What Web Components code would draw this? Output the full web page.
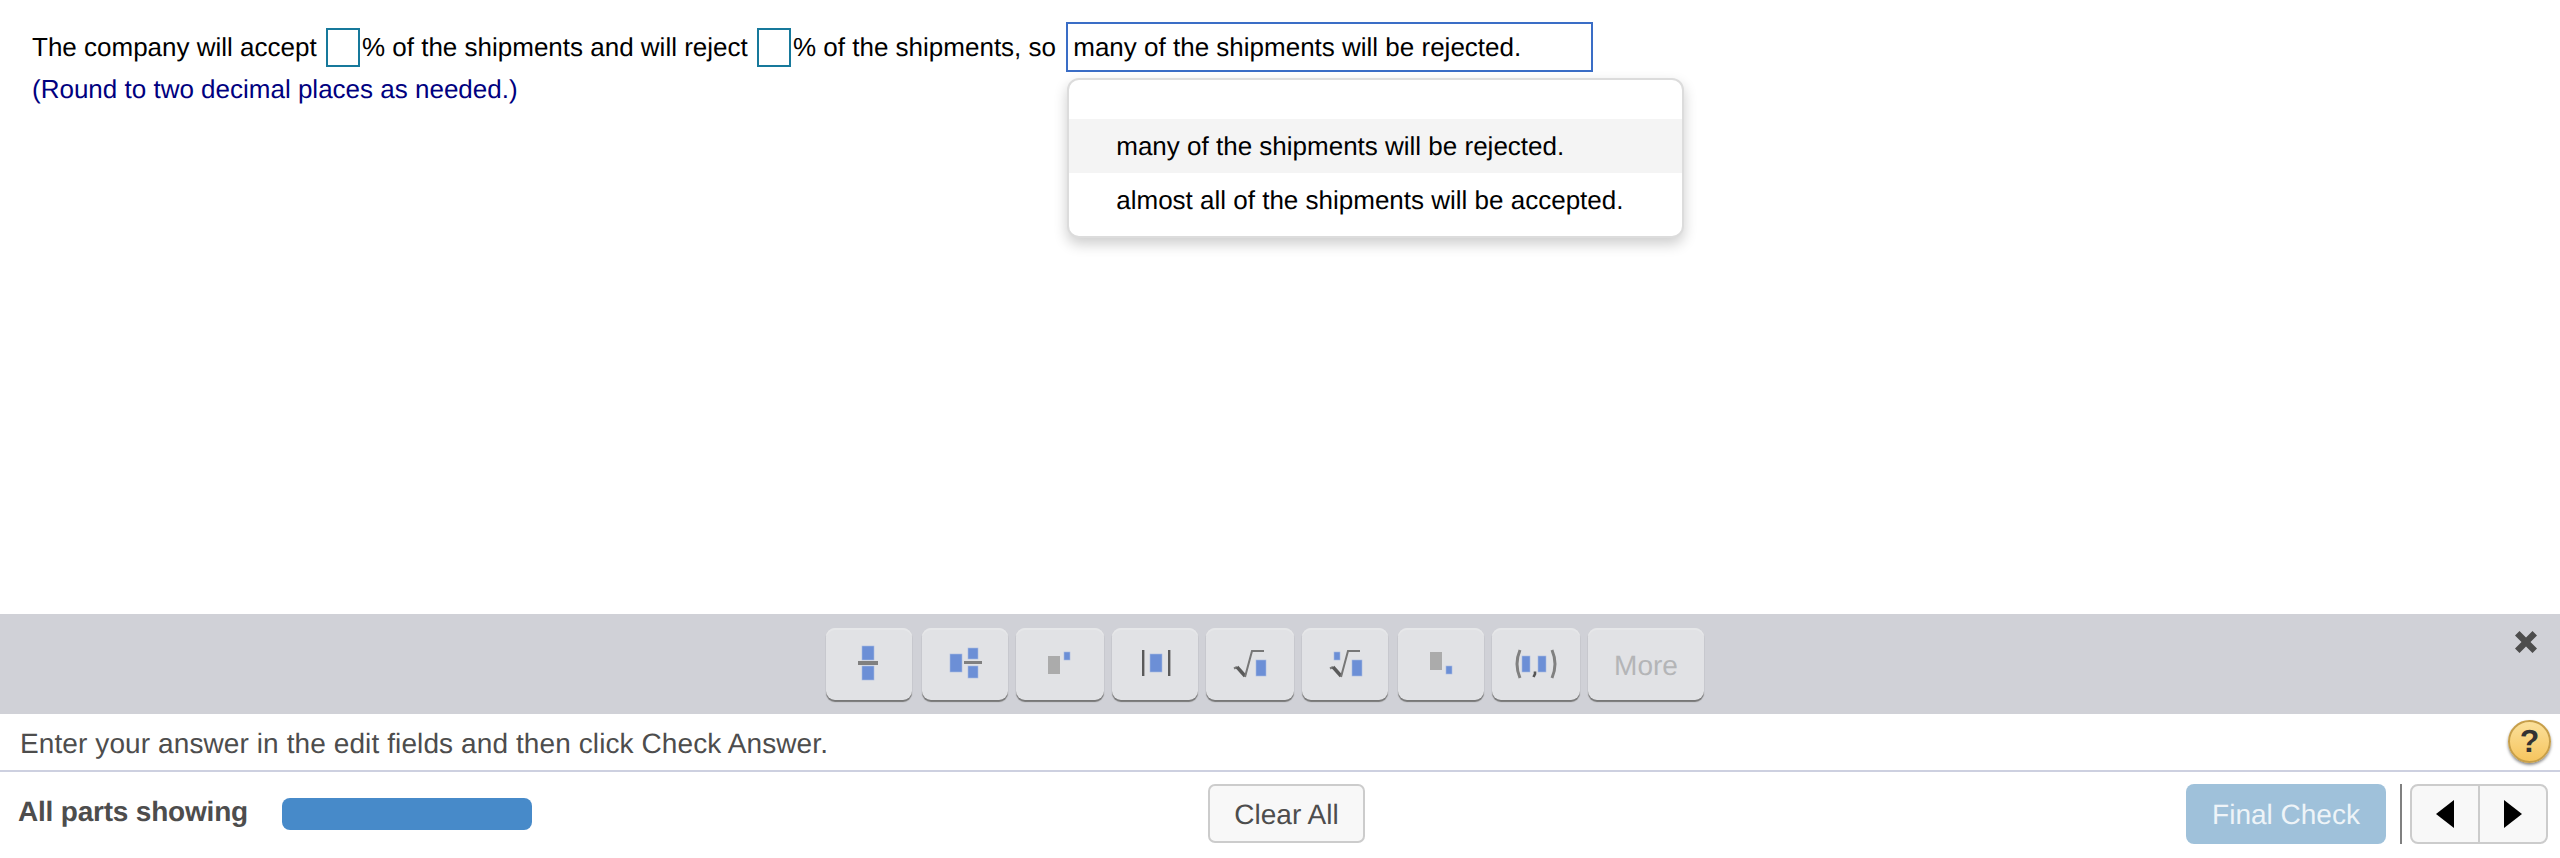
<!DOCTYPE html>
<html lang="en"><head><meta charset="utf-8"><title>Question</title>
<style>
html,body{margin:0;padding:0;background:#fff;overflow:hidden}
body{font-family:"Liberation Sans",Arial,sans-serif;text-rendering:geometricPrecision}
</style></head><body>
<q-app>
  <q-question slot="main">
    The company will accept <q-blank></q-blank>% of the shipments and will reject <q-blank></q-blank>% of the shipments, so <q-dropdown value="many of the shipments will be rejected."><q-option selected>many of the shipments will be rejected.</q-option><q-option>almost all of the shipments will be accepted.</q-option></q-dropdown>
    <span slot="note">(Round to two decimal places as needed.)</span>
  </q-question>
  <eq-toolbar slot="toolbar">
    <eq-tool w="86" style="margin-left:826px" title="fraction"><svg viewBox="0 0 86 72"><rect class="b" x="36" y="18" width="12" height="14"/><rect class="l" x="32" y="33" width="20" height="4"/><rect class="b" x="36" y="38" width="12" height="14"/></svg></eq-tool>
    <eq-tool w="86" style="margin-left:10px" title="mixed fraction"><svg viewBox="0 0 86 72"><rect class="b" x="28" y="26" width="12" height="18"/><rect class="b" x="46" y="20" width="10" height="11"/><rect class="l" x="42" y="33" width="18" height="3"/><rect class="b" x="46" y="38" width="10" height="12"/></svg></eq-tool>
    <eq-tool w="88" style="margin-left:8px" title="exponent"><svg viewBox="0 0 88 72"><rect class="g" x="32" y="28" width="12" height="18"/><rect class="b" x="48" y="24" width="6" height="8"/></svg></eq-tool>
    <eq-tool w="86" style="margin-left:8px" title="absolute value"><svg viewBox="0 0 86 72"><rect class="d" x="30" y="22" width="2.4" height="26"/><rect class="b" x="38" y="26" width="12" height="18"/><rect class="d" x="56" y="22" width="2.4" height="26"/></svg></eq-tool>
    <eq-tool w="88" style="margin-left:8px" title="square root"><svg viewBox="0 0 88 72"><path class="s" d="M28 40.500l3-1.500"/><path class="k" d="M31 39l8 9"/><path class="s" d="M39 49l7-26h12"/><rect class="b" x="50" y="32" width="10" height="16"/></svg></eq-tool>
    <eq-tool w="86" style="margin-left:8px" title="nth root"><svg viewBox="0 0 86 72"><path class="s" d="M28 40.500l3-1.500"/><path class="k" d="M31 39l8 9"/><path class="s" d="M39 49l7-26h12"/><rect class="b" x="32" y="24" width="6" height="8"/><rect class="b" x="50" y="32" width="10" height="16"/></svg></eq-tool>
    <eq-tool w="86" style="margin-left:10px" title="subscript"><svg viewBox="0 0 86 72"><rect class="g" x="32" y="24" width="12" height="18"/><rect class="b" x="48" y="38" width="6" height="8"/></svg></eq-tool>
    <eq-tool w="88" style="margin-left:8px" title="ordered pair"><svg viewBox="0 0 88 72"><path class="p" d="M28 22q-6 14 0 28M60 22q6 14 0 28"/><rect class="b" x="30" y="28" width="8" height="16"/><path class="c" d="M43 43.500v2.500l-1.500 3"/><rect class="b" x="46" y="28" width="8" height="16"/></svg></eq-tool>
    <eq-tool w="116" style="margin-left:8px" class="more"><span class="mt">More</span></eq-tool>
    <svg slot="close" viewBox="0 0 22 22" width="22" height="22"><path d="M4.500 0 11 6.500 17.500 0 22 4.500 15.500 11 22 17.500 17.500 22 11 15.500 4.500 22 0 17.500 6.500 11 0 4.500z" fill="#4d4d4d"/></svg>
  </eq-toolbar>
  <q-status slot="status">Enter your answer in the edit fields and then click Check Answer.</q-status>
  <q-actions slot="actions"></q-actions>
</q-app>
<script>
function def(name, html, extra){
  customElements.define(name, class extends HTMLElement{
    constructor(){super();this.attachShadow({mode:'open'}).innerHTML=html;}
    connectedCallback(){ if(extra) extra(this); }
  });
}
def('q-app',`<style>
:host{display:grid;grid-template-rows:614px 100px 58px 86px;height:858px;width:2560px;overflow:hidden;color:#000}
</style><slot name="main"></slot><slot name="toolbar"></slot><slot name="status"></slot><slot name="actions"></slot>`);
def('q-question',`<style>
:host{display:block;padding:26px 0 0 32px;font-size:26px;line-height:43px;white-space:nowrap;color:#000}
.note{display:block;color:#00007f;line-height:41px}
.line{display:block;height:43px}
</style><span class="line"><slot></slot></span><span class="note"><slot name="note"></slot></span>`);
def('q-blank',`<style>
:host{display:inline-block;box-sizing:border-box;width:34px;height:39px;border:2px solid #17799b;background:#fff;vertical-align:middle;margin:-4px 2px 0 2px}
</style>`);
def('q-dropdown',`<style>
:host{display:inline-block;position:relative;vertical-align:middle;margin:-4px 0 0 3px}
.box{box-sizing:border-box;display:block;width:527px;height:50px;border:2px solid #3a6dc6;padding:0 0 0 5px;line-height:46px;background:#fff;color:#000}
.menu{position:absolute;left:1px;top:56px;box-sizing:border-box;width:617px;height:160px;background:#fff;border:2px solid #dcdcdc;border-radius:12px;box-shadow:0 6px 14px rgba(0,0,0,.2);padding:39px 0 0;overflow:hidden}
</style><span class="box"></span><div class="menu"><slot></slot></div>`,
 el=>{el.shadowRoot.querySelector('.box').textContent=el.getAttribute('value');});
def('q-option',`<style>
:host{display:block;height:54px;line-height:55px;padding-left:47px;color:#000}
:host([selected]){background:#f4f4f4}
</style><slot></slot>`);
def('eq-toolbar',`<style>
:host{display:flex;box-sizing:border-box;background:#d0d1d7;padding-top:14px;height:100px;position:relative;align-items:flex-start}
.x{position:absolute;left:2515px;top:17px;line-height:0}
</style><slot></slot><span class="x"><slot name="close"></slot></span>`);
def('eq-tool',`<style>
:host{display:flex;align-items:center;justify-content:center;flex:none;box-sizing:border-box;height:72px;background:#e1e2e5;border-radius:9px;box-shadow:inset 0 2px 0 #e6e7e9,0 2px 1px #777;color:#b4b5b7;font-size:28px}
::slotted(svg){display:block;width:100%;height:100%;filter:blur(.5px)}
::slotted(.mt){padding-top:4px}
</style><slot></slot>`,
 el=>{el.style.width=el.getAttribute('w')+'px';});
def('q-status',`<style>
:host{display:flex;align-items:center;justify-content:space-between;box-sizing:border-box;height:58px;border-bottom:2px solid #cdd0e0;padding:0 9px 0 20px;font-size:28px;color:#4d4d4d}
.t{padding-top:4px;letter-spacing:.1px}
.help{box-sizing:border-box;width:43px;height:43px;border-radius:50%;border:2px solid #c79f4a;background:linear-gradient(#fbe09a,#f6c55f);box-shadow:0 2px 3px rgba(0,0,0,.45);display:flex;align-items:center;justify-content:center;color:#333;font:bold 32px "Liberation Sans",Arial,sans-serif;margin-top:-2px}
</style><span class="t"><slot></slot></span><span class="help">?</span>`);
def('q-actions',`<style>
:host{display:flex;align-items:flex-start;box-sizing:border-box;height:86px;padding:12px 12px 0 18px;font-size:28px;color:#4d4d4d}
.label{font-weight:bold;width:264px;line-height:56px;white-space:nowrap;letter-spacing:-.2px}
.bar{width:250px;height:32px;margin-top:14px;background:#478ac9;border-radius:8px}
.clear{box-sizing:border-box;width:157px;height:59px;margin-left:676px;border:2px solid #ccc;border-radius:7px;background:#f8f8f8;text-align:center;line-height:57px}
.final{box-sizing:border-box;width:200px;height:60px;margin-left:auto;border-radius:8px;background:#9fc1da;color:#eef4f8;text-align:center;line-height:62px}
.sep{width:2px;height:60px;background:#808080;margin:0 8px 0 14px}
.nav{box-sizing:border-box;width:138px;height:60px;display:flex;border:2px solid #ccc;border-radius:8px;background:#f8f8f8}
.nav span{flex:1;display:flex;align-items:center;justify-content:center}
.nav span+span{border-left:2px solid #ccc}
</style><span class="label">All parts showing</span><span class="bar"></span><span class="clear">Clear All</span><span class="final">Final Check</span><span class="sep"></span><span class="nav"><span><svg width="18" height="28" viewBox="0 0 18 28"><path d="M18 0V28L0 14z" fill="#000"/></svg></span><span><svg width="18" height="28" viewBox="0 0 18 28"><path d="M0 0V28L18 14z" fill="#000"/></svg></span></span>`);
</script>
<style>
eq-tool svg .b{fill:#6c8fd6;stroke:#a9bbe2;stroke-width:.6}
eq-tool svg .g{fill:#ababab}
eq-tool svg .l{fill:#808080}
eq-tool svg .d{fill:#5a5a5a}
eq-tool svg .s{fill:none;stroke:#777;stroke-width:2}
eq-tool svg .k{fill:none;stroke:#5a5a5a;stroke-width:3.400}
eq-tool svg .p{fill:none;stroke:#808080;stroke-width:3}
eq-tool svg .c{fill:none;stroke:#555;stroke-width:2.600}
</style>
</body></html>
